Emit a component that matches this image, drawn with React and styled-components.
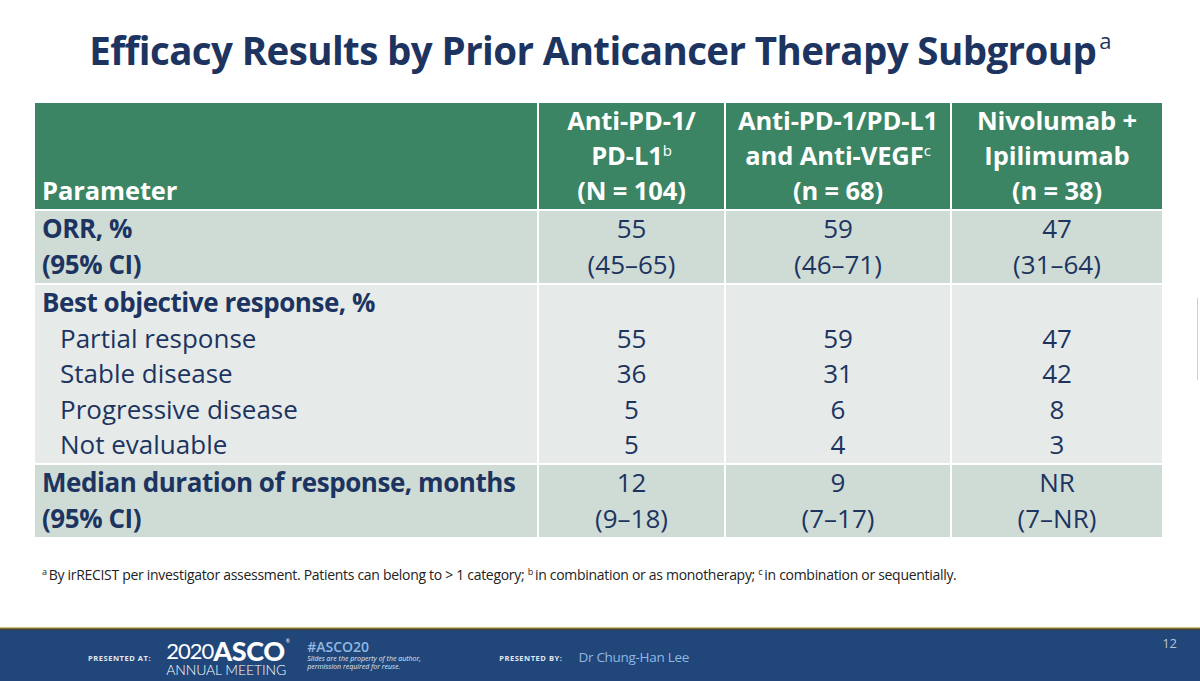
import React from "react";
import styled, { createGlobalStyle } from "styled-components";

const Global = createGlobalStyle`
  html, body { margin: 0; padding: 0; background: #ffffff; }
  body { font-family: "Open Sans", "Liberation Sans", sans-serif; }
  * { box-sizing: border-box; }
`;

const Slide = styled.div`
  width: 1200px;
  height: 681px;
  display: flex;
  flex-direction: column;
  background: #ffffff;
  overflow: hidden;
  position: relative;
`;

const Title = styled.h1`
  margin: 0;
  padding-top: 24px;
  height: 103px;
  text-align: center;
  font-family: "Open Sans", sans-serif;
  font-weight: 700;
  font-size: 38.5px;
  line-height: 52px;
  letter-spacing: -0.6px;
  color: #1d3461;
  sup {
    font-size: 22px;
    font-weight: 400;
    vertical-align: 16px;
    line-height: 0;
    margin-left: 3px;
  }
`;

const Table = styled.div`
  margin-left: 35px;
  width: 1127px;
  display: grid;
  grid-template-columns: 502px 185px 224px 210px;
  column-gap: 2px;
  row-gap: 2px;
  background: #ffffff;
`;

const HeadCell = styled.div`
  background: #3b8564;
  color: #ffffff;
  font-weight: 700;
  font-size: 25.5px;
  letter-spacing: -0.1px;
  line-height: 35px;
  height: 106px;
  padding: 0 4px 1px;
  display: flex;
  flex-direction: column;
  justify-content: flex-end;
  align-items: ${(p) => (p.$left ? "flex-start" : "center")};
  text-align: ${(p) => (p.$left ? "left" : "center")};
  padding-left: ${(p) => (p.$left ? "7px" : "4px")};
  white-space: nowrap;
  sup {
    font-size: 15px;
    font-weight: 400;
    line-height: 0;
    vertical-align: 9px;
  }
`;

const Cell = styled.div`
  background: ${(p) => (p.$tone === "dark" ? "#cfdcd6" : "#e6ebe9")};
  color: #1d3461;
  font-size: 26px;
  line-height: 35.6px;
  display: flex;
  flex-direction: column;
  align-items: ${(p) => (p.$left ? "flex-start" : "center")};
  padding-left: ${(p) => (p.$left ? "7px" : "0")};
`;

const Line = styled.span`
  display: block;
  white-space: nowrap;
  font-weight: ${(p) => (p.$bold ? 700 : 400)};
  letter-spacing: ${(p) => (p.$bold ? "-0.45px" : "0")};
  padding-left: ${(p) => (p.$indent ? "18px" : "0")};
  height: ${(p) => (p.$tall ? "36px" : "35.6px")};
`;

const Footnote = styled.p`
  margin: 28px 0 0 42px;
  font-size: 14px;
  letter-spacing: -0.3px;
  color: #222222;
  line-height: 20px;
  white-space: nowrap;
  sup {
    font-size: 9px;
    line-height: 0;
    vertical-align: 5px;
    margin-right: 2px;
  }
`;

const Spacer = styled.div`
  flex: 1;
`;

const Footer = styled.footer`
  height: 54px;
  flex-shrink: 0;
  background: linear-gradient(
    to bottom,
    #efe3c2 0px,
    #b59a4e 1px,
    #4a4a22 2px,
    #2d3f52 3px,
    #21467a 4px,
    #21467a 100%
  );
  display: flex;
  align-items: center;
  padding: 4px 0 0 88px;
  position: relative;
  color: #ffffff;
`;

const SmallCaps = styled.span`
  font-family: "Open Sans", sans-serif;
  font-size: 7.5px;
  font-weight: 700;
  letter-spacing: 0.55px;
  color: #e4e8ef;
  margin-top: 4px;
  white-space: nowrap;
`;

const Logo = styled.div`
  margin-left: 15px;
  width: 118px;
  height: 40px;
  display: flex;
  flex-direction: column;
  justify-content: flex-start;
  color: #ffffff;
  margin-top: 2px;
`;

const LogoTop = styled.div`
  display: flex;
  align-items: flex-end;
  font-family: "Lato", sans-serif;
  height: 24px;
  line-height: 20px;
  white-space: nowrap;
`;

const LogoYear = styled.span`
  display: inline-block;
  height: 20px;
  font-size: 22px;
  font-weight: 400;
  letter-spacing: -1px;
  line-height: 20px;
`;

const LogoName = styled.span`
  display: inline-block;
  height: 20px;
  font-size: 27px;
  font-weight: 900;
  letter-spacing: -0.4px;
  line-height: 20px;
`;

const LogoMark = styled.span`
  font-size: 5px;
  line-height: 5px;
  align-self: flex-start;
  margin-left: 1px;
  margin-top: 2px;
`;

const LogoBottom = styled.div`
  font-family: "Lato", sans-serif;
  font-weight: 300;
  font-size: 14px;
  line-height: 15px;
  letter-spacing: -0.1px;
  white-space: nowrap;
  margin-top: 1px;
`;

const Hashtag = styled.div`
  margin-left: 23px;
  width: 192px;
  display: flex;
  flex-direction: column;
  margin-top: -3px;
`;

const HashTitle = styled.div`
  font-family: "Open Sans", sans-serif;
  font-size: 14px;
  font-weight: 600;
  color: #8fb8e3;
  line-height: 17px;
`;

const HashNote = styled.div`
  font-family: "Open Sans", sans-serif;
  font-style: italic;
  font-size: 7px;
  color: #dfe6f0;
  line-height: 8px;
  white-space: nowrap;
`;

const ByLabel = styled(SmallCaps)``;

const Presenter = styled.span`
  margin-left: 16px;
  font-family: "Open Sans", sans-serif;
  font-size: 13.5px;
  letter-spacing: -0.3px;
  color: #8fb8e3;
  margin-top: 1px;
`;

const PageNum = styled.span`
  position: absolute;
  right: 23px;
  top: 7px;
  font-family: "Open Sans", sans-serif;
  font-size: 13px;
  color: #b9c4d3;
`;

const EdgeMark = styled.div`
  position: absolute;
  right: 2px;
  top: 298px;
  width: 1px;
  height: 82px;
  background: #c9d0d6;
`;

const groups = [
  { label: "Anti-PD-1/", l2: "PD-L1", sup: "b", n: "(N = 104)" },
  { label: "Anti-PD-1/PD-L1", l2: "and Anti-VEGF", sup: "c", n: "(n = 68)" },
  { label: "Nivolumab +", l2: "Ipilimumab", sup: "", n: "(n = 38)" },
];

const orr = [["55", "(45–65)"], ["59", "(46–71)"], ["47", "(31–64)"]];
const best = [
  ["55", "36", "5", "5"],
  ["59", "31", "6", "4"],
  ["47", "42", "8", "3"],
];
const dor = [["12", "(9–18)"], ["9", "(7–17)"], ["NR", "(7–NR)"]];

export default function App() {
  return (
    <>
      <Global />
      <Slide>
        <Title>
          Efficacy Results by Prior Anticancer Therapy Subgroup<sup>a</sup>
        </Title>
        <Table>
          <HeadCell $left>
            <span>Parameter</span>
          </HeadCell>
          {groups.map((g) => (
            <HeadCell key={g.label}>
              <span>{g.label}</span>
              <span>
                {g.l2}
                {g.sup && <sup>{g.sup}</sup>}
              </span>
              <span>{g.n}</span>
            </HeadCell>
          ))}

          <Cell $left $tone="dark">
            <Line $bold $tall>ORR, %</Line>
            <Line $bold $tall>(95% CI)</Line>
          </Cell>
          {orr.map((v, i) => (
            <Cell key={i} $tone="dark">
              <Line $tall>{v[0]}</Line>
              <Line $tall>{v[1]}</Line>
            </Cell>
          ))}

          <Cell $left>
            <Line $bold>Best objective response, %</Line>
            <Line $indent>Partial response</Line>
            <Line $indent>Stable disease</Line>
            <Line $indent>Progressive disease</Line>
            <Line $indent>Not evaluable</Line>
          </Cell>
          {best.map((col, i) => (
            <Cell key={i}>
              <Line>&nbsp;</Line>
              {col.map((v, j) => (
                <Line key={j}>{v}</Line>
              ))}
            </Cell>
          ))}

          <Cell $left $tone="dark">
            <Line $bold $tall>Median duration of response, months</Line>
            <Line $bold $tall>(95% CI)</Line>
          </Cell>
          {dor.map((v, i) => (
            <Cell key={i} $tone="dark">
              <Line $tall>{v[0]}</Line>
              <Line $tall>{v[1]}</Line>
            </Cell>
          ))}
        </Table>
        <Footnote>
          <sup>a</sup>By irRECIST per investigator assessment. Patients can
          belong to &gt; 1 category; <sup>b</sup>in combination or as
          monotherapy; <sup>c</sup>in combination or sequentially.
        </Footnote>
        <Spacer />
        <EdgeMark />
        <Footer>
          <SmallCaps>PRESENTED AT:</SmallCaps>
          <Logo>
            <LogoTop>
              <LogoYear>2020</LogoYear>
              <LogoName>ASCO</LogoName>
              <LogoMark>®</LogoMark>
            </LogoTop>
            <LogoBottom>ANNUAL MEETING</LogoBottom>
          </Logo>
          <Hashtag>
            <HashTitle>#ASCO20</HashTitle>
            <HashNote>Slides are the property of the author,</HashNote>
            <HashNote>permission required for reuse.</HashNote>
          </Hashtag>
          <ByLabel>PRESENTED BY:</ByLabel>
          <Presenter>Dr Chung-Han Lee</Presenter>
          <PageNum>12</PageNum>
        </Footer>
      </Slide>
    </>
  );
}
